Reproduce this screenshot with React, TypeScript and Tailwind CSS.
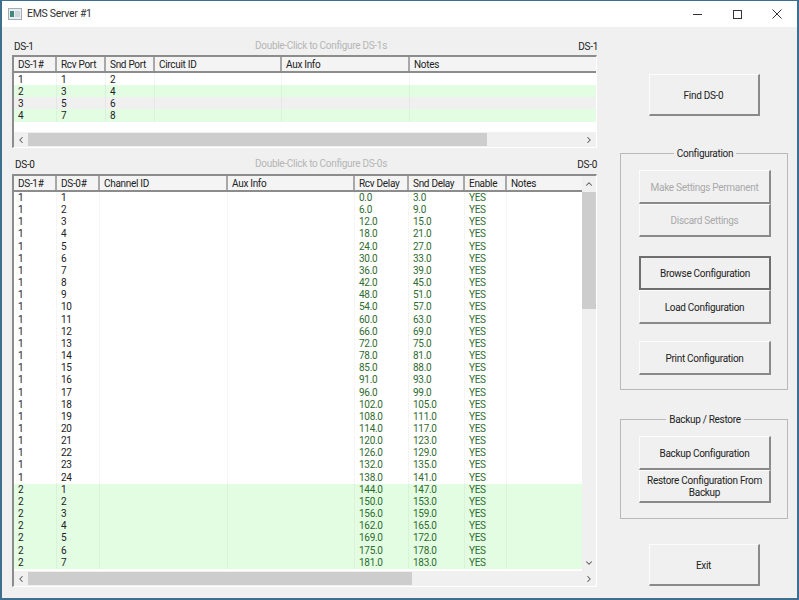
import React from "react";
import { ChevronLeft, ChevronRight, ChevronUp, ChevronDown } from "lucide-react";

const ds1Cols = [43, 49, 49, 127, 128, 187];
const ds0Cols = [43, 43, 128, 127, 54, 56, 42, 76];
const rcv = [0,6,12,18,24,30,36,42,48,54,60,66,72,78,85,91,96,102,108,114,120,126,132,138,144,150,156,162,169,175,181];
const snd = [3,9,15,21,27,33,39,45,51,57,63,69,75,81,88,93,99,105,111,117,123,129,135,141,147,153,159,165,172,178,183];

function Head({ labels, widths }: { labels: string[]; widths: number[] }) {
  return (
    <div className="flex h-[16px] shrink-0 border-b-2 border-[#8c8c8c] bg-[#f4f4f4]">
      {labels.map((l, i) => (
        <div key={l} style={{ width: widths[i] }} className="shrink-0 border-r-2 border-[#a8a8a8] pl-[4px] leading-[15px] text-[#222] last:border-r-0 overflow-hidden whitespace-nowrap">
          {l}
        </div>
      ))}
    </div>
  );
}

function Row({ cells, widths, bg, green, low }: { cells: string[]; widths: number[]; bg: string; green?: number[]; low?: boolean }) {
  return (
    <div className="flex h-[12.17px]" style={{ background: bg }}>
      {widths.map((w, i) => (
        <div key={i} style={{ width: w, color: green?.includes(i) ? "#2f6b2f" : "#222" }} className={`shrink-0 border-r border-[#0000000a] pl-[4px] overflow-hidden whitespace-nowrap last:border-r-0 ${low ? "leading-[14px]" : "leading-[12px]"}`}>
          {cells[i] ?? ""}
        </div>
      ))}
    </div>
  );
}

function HScroll({ thumb }: { thumb: number }) {
  return (
    <div className="flex h-[15px] shrink-0 items-center bg-[#f0f0f0]">
      <div className="flex w-[14px] justify-center"><ChevronLeft size={10} strokeWidth={2.5} color="#555" /></div>
      <div className="flex-1 self-stretch py-px">
        <div style={{ width: thumb }} className="h-full bg-[#cdcdcd]" />
      </div>
      <div className="flex w-[15px] justify-center"><ChevronRight size={10} strokeWidth={2.5} color="#555" /></div>
    </div>
  );
}

function Btn({ children, h = "h-[34px]", w = "w-[132px]", dim, dark }: { children: React.ReactNode; h?: string; w?: string; dim?: boolean; dark?: boolean }) {
  const edge = dark
    ? "border-2 border-[#6e6e6e]"
    : "border border-t-[#fcfcfc] border-l-[#fcfcfc] border-r-2 border-b-2 border-r-[#8a8a8a] border-b-[#8a8a8a]";
  return (
    <div className={`${h} ${w} ${edge} flex items-center justify-center bg-[#f0f0f0] text-center leading-[12px] px-[3px] pt-[2px] ${dim ? "text-[#a9a9a9]" : "text-[#222]"}`}>
      {children}
    </div>
  );
}

function Group({ title, className, children }: { title: string; className: string; children: React.ReactNode }) {
  return (
    <div className={`relative w-[168px] border border-[#b9b9b9] flex flex-col items-center ${className}`}>
      <div className="absolute top-[-7px] bg-[#f0f0f0] px-[3px] leading-[13px] text-[#222]">{title}</div>
      {children}
    </div>
  );
}

export default function App() {
  return (
    <div className="flex h-[600px] w-[799px] flex-col border-2 border-t-[1px] border-[#3f6f8f] bg-[#f0f0f0] text-[10px] tracking-[-0.3px] text-[#222]" style={{ fontFamily: 'Roboto, "Liberation Sans", sans-serif' }}>
      <div className="flex h-[26px] shrink-0 items-center bg-white pl-[6px] text-[10.5px]">
        <svg width="14" height="12" viewBox="0 0 14 12" className="mr-[5px]">
          <rect x="0.5" y="0.5" width="13" height="11" fill="#e8edf0" stroke="#a4adb5" />
          <rect x="2" y="3" width="4" height="6" fill="#3f8a7c" />
          <rect x="7" y="3" width="5" height="6" fill="#cfd6dc" />
        </svg>
        <span className="text-[#333]">EMS Server #1</span>
        <div className="ml-auto flex items-center">
          <div className="flex w-[40px] justify-center"><div className="h-[1px] w-[9px] bg-[#333]" /></div>
          <div className="flex w-[40px] justify-center"><div className="h-[9px] w-[9px] border border-[#333]" /></div>
          <div className="flex w-[40px] justify-center pr-[1px]">
            <svg width="10" height="10" viewBox="0 0 10 10" stroke="#333" strokeWidth="1"><path d="M0.5 0.5 L9.5 9.5 M9.5 0.5 L0.5 9.5" /></svg>
          </div>
        </div>
      </div>

      <div className="flex min-h-0 flex-1">
        <div className="ml-[10px] flex w-[585px] shrink-0 flex-col pt-[12px]">
          <div className="relative flex h-[16px] items-center justify-between leading-[13px]">
            <span className="pl-[2px] pb-[2px]">DS-1</span>
            <span className="absolute left-[243px] top-0 text-[#b5b5b5]">Double-Click to Configure DS-1s</span>
            <span className="-mr-[1px] pb-[1px]">DS-1</span>
          </div>
          <div className="flex h-[93px] shrink-0 flex-col border-2 border-r border-b border-[#8c8c8c] border-r-white border-b-white bg-white">
            <Head labels={["DS-1#", "Rcv Port", "Snd Port", "Circuit ID", "Aux Info", "Notes"]} widths={ds1Cols} />
            <div className="min-h-0 flex-1">
              {[0, 1, 2, 3].map((i) => (
                <Row key={i} low widths={ds1Cols} bg={i % 2 ? "#e2fde2" : i === 0 ? "#ffffff" : "#f0f0f0"} cells={[String(i + 1), String(i * 2 + 1), String(i * 2 + 2)]} />
              ))}
            </div>
            <HScroll thumb={459} />
          </div>

          <div className="relative mt-[9px] flex h-[17px] items-center justify-between leading-[13px]">
            <span className="pl-[3px] pb-[2px]">DS-0</span>
            <span className="absolute left-[243px] top-0 text-[#b5b5b5]">Double-Click to Configure DS-0s</span>
            <span className="pb-[2px]">DS-0</span>
          </div>
          <div className="flex h-[413px] shrink-0 flex-col border-2 border-r border-b border-[#8c8c8c] border-r-white border-b-white bg-white">
            <div className="flex min-h-0 flex-1">
              <div className="min-w-0 flex-1 overflow-hidden">
                <Head labels={["DS-1#", "DS-0#", "Channel ID", "Aux Info", "Rcv Delay", "Snd Delay", "Enable", "Notes"]} widths={ds0Cols} />
                {rcv.map((r, i) => (
                  <Row
                    key={i}
                    widths={ds0Cols}
                    bg={i < 24 ? "#ffffff" : "#e2fde2"}
                    green={[4, 5, 6]}
                    cells={[i < 24 ? "1" : "2", String(i < 24 ? i + 1 : i - 23), "", "", r.toFixed(1), snd[i].toFixed(1), "YES", ""]}
                  />
                ))}
              </div>
              <div className="flex w-[14px] shrink-0 flex-col items-center bg-[#f0f0f0]">
                <div className="flex h-[16px] items-center"><ChevronUp size={10} strokeWidth={2.5} color="#555" /></div>
                <div className="w-full flex-1"><div className="h-[117px] w-full bg-[#cdcdcd]" /></div>
                <div className="flex h-[16px] items-center"><ChevronDown size={10} strokeWidth={2.5} color="#555" /></div>
              </div>
            </div>
            <HScroll thumb={384} />
          </div>
        </div>

        <div className="ml-[23px] flex w-[168px] flex-col items-center pt-[47px]">
          <Btn w="w-[111px]" h="h-[42px]">Find DS-0</Btn>
          <Group title="Configuration" className="mt-[37px] h-[237px] pt-[16px] pl-[2px]">
            <Btn dim>Make Settings Permanent</Btn>
            <Btn dim h="h-[33px]">Discard Settings</Btn>
            <div className="mt-[19px]"><Btn dark>Browse Configuration</Btn></div>
            <Btn>Load Configuration</Btn>
            <div className="mt-[17px]"><Btn>Print Configuration</Btn></div>
          </Group>
          <Group title="Backup / Restore" className="mt-[29px] h-[100px] pt-[16px] pl-[2px]">
            <Btn>Backup Configuration</Btn>
            <Btn h="h-[33px]">Restore Configuration From Backup</Btn>
          </Group>
          <div className="mt-[25px]"><Btn w="w-[111px]" h="h-[42px]">Exit</Btn></div>
        </div>
      </div>
    </div>
  );
}
